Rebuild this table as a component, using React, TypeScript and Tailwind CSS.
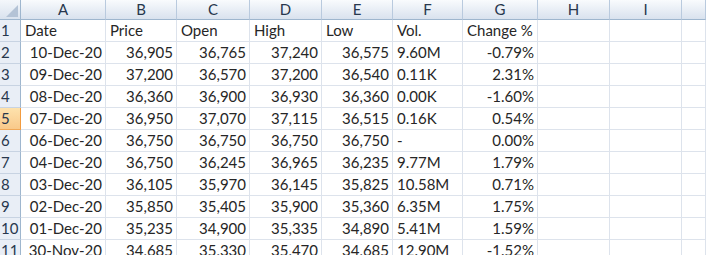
import React from 'react';

const cols = ['A', 'B', 'C', 'D', 'E', 'F', 'G', 'H', 'I', ''];

const header = ['Date', 'Price', 'Open', 'High', 'Low', 'Vol.', 'Change %'];

const rows: string[][] = [
    ['10-Dec-20', '36,905', '36,765', '37,240', '36,575', '9.60M', '-0.79%'],
    ['09-Dec-20', '37,200', '36,570', '37,200', '36,540', '0.11K', '2.31%'],
    ['08-Dec-20', '36,360', '36,900', '36,930', '36,360', '0.00K', '-1.60%'],
    ['07-Dec-20', '36,950', '37,070', '37,115', '36,515', '0.16K', '0.54%'],
    ['06-Dec-20', '36,750', '36,750', '36,750', '36,750', '-', '0.00%'],
    ['04-Dec-20', '36,750', '36,245', '36,965', '36,235', '9.77M', '1.79%'],
    ['03-Dec-20', '36,105', '35,970', '36,145', '35,825', '10.58M', '0.71%'],
    ['02-Dec-20', '35,850', '35,405', '35,900', '35,360', '6.35M', '1.75%'],
    ['01-Dec-20', '35,235', '34,900', '35,335', '34,890', '5.41M', '1.59%'],
    ['30-Nov-20', '34,685', '35,330', '35,470', '34,685', '12.90M', '-1.52%'],
];

// Vol. column holds text, so it sits on the left like the header row
const leftCol = (i: number) => i === 5;

function Cell({ children, right }: { children?: React.ReactNode; right?: boolean }) {
    return (
        <div
            className={`flex items-end pb-[3px] pl-[4px] pr-[3px] border-r border-b border-[#dde3ec] overflow-hidden whitespace-nowrap bg-white ${
                right ? 'justify-end' : 'justify-start'
            }`}
        >
            {children}
        </div>
    );
}

function RowHead({ n, active }: { n: number; active?: boolean }) {
    return (
        <div
            className={`flex items-center pl-[1px] border-b border-r ${
                active
                    ? 'bg-gradient-to-b from-[#fde2ad] to-[#f9c98a] border-[#f0a858] border-r-[#f29b3f]'
                    : 'bg-[#e9eef6] border-[#c8d3e2] border-r-[#9eb6ce]'
            } text-[#27374d]`}
        >
            {n}
        </div>
    );
}

export default function App() {
    return (
        <div
            className="w-[706px] h-[255px] overflow-hidden bg-white text-[15px] text-[#262626] leading-none"
            style={{ fontFamily: 'Lato, "Open Sans", sans-serif' }}
        >
            <div className="grid grid-cols-[21px_85px_71px_73px_72px_71px_70px_75px_72px_72px_1fr] grid-rows-[20px_repeat(11,22px)]">
                {/* corner select-all */}
                <div className="relative bg-gradient-to-b from-[#f4f7fb] to-[#d9e2ee] border-r border-b border-[#9eb6ce]">
                    <div className="absolute right-[2px] bottom-[2px] w-0 h-0 border-l-[12px] border-l-transparent border-b-[12px] border-b-[#b4c3d6]" />
                </div>
                {cols.map((c, i) => (
                    <div
                        key={i}
                        className="flex items-center justify-center bg-gradient-to-b from-[#f9fbfd] to-[#d9e2ee] border-r border-r-[#b9cade] border-b border-b-[#9eb6ce] text-[#27374d]"
                    >
                        {c}
                    </div>
                ))}

                <RowHead n={1} />
                {header.map((h, i) => (
                    <Cell key={i}>{h}</Cell>
                ))}
                <Cell />
                <Cell />
                <Cell />

                {rows.map((r, ri) => (
                    <React.Fragment key={ri}>
                        <RowHead n={ri + 2} active={ri + 2 === 5} />
                        {r.map((v, i) => (
                            <Cell key={i} right={!leftCol(i)}>
                                {v}
                            </Cell>
                        ))}
                        <Cell />
                        <Cell />
                        <Cell />
                    </React.Fragment>
                ))}
            </div>
        </div>
    );
}
